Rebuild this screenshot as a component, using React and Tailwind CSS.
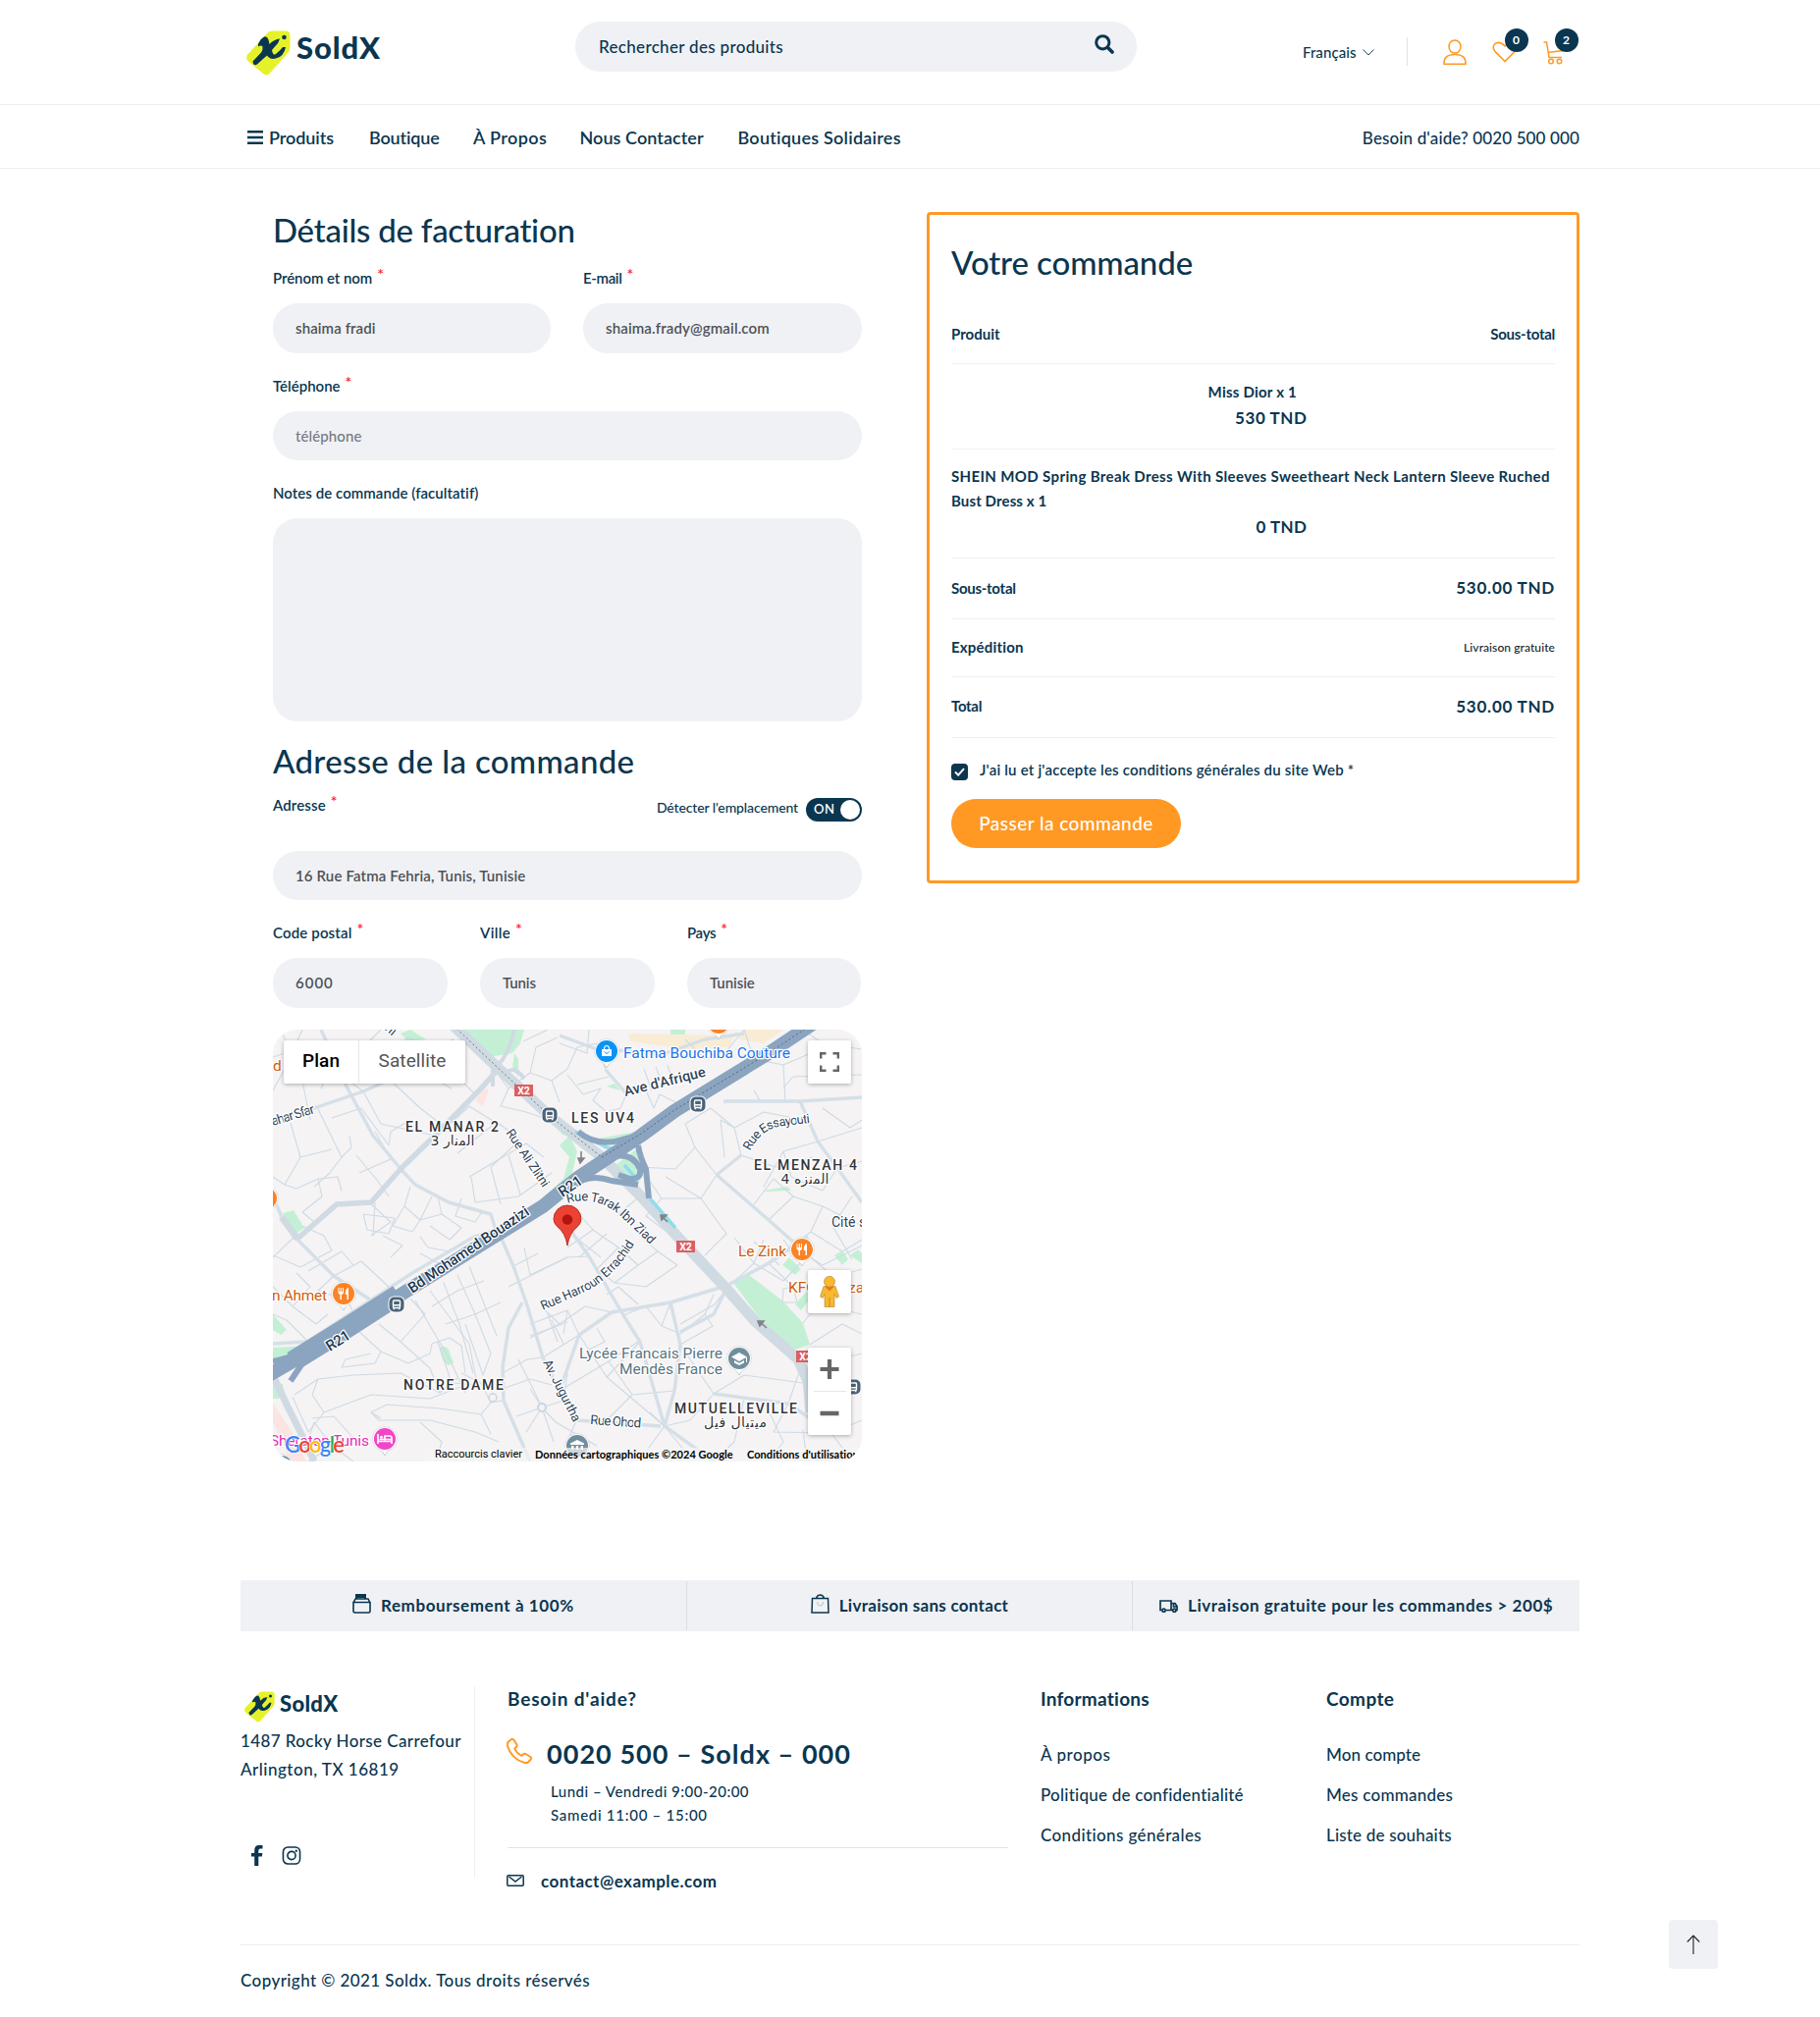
import React from "react";

function Tag({ className }) {
  return (
    <svg viewBox="0 0 45 46" className={className} fill="none">
      <path d="M22 2Q23.500 .5 26 .5H40Q44.500 .5 44.500 5V17Q44.500 20 43 22L24 43.500Q20 47.500 16.500 43.500L1.200 31Q-.8 27.500 1.200 24.500Z" fill="#e5f22a" />
      <path d="M13 12Q15 8 18 6.500Q21 5.500 22.500 9.500L23.500 14Q28 9 34 8.500Q33 13 29 16.500L26 20Q27 26 30 24Q35 20 37 17L40 17Q38 27 30 28.500Q24 30 21 25.500L17 29L11 34.500Q7 37 6.500 31.500L15 22.500Q17 20 16.500 16.500Q15 14.500 12 16.500Q11 14.500 13 12Z" fill="#0a3650" />
      <circle cx="38.500" cy="7" r="2.300" fill="#0a3650" />
    </svg>
  );
}

function Label({ children, className = "", required = true }) {
  return (
    <div className={`flex h-6 items-center whitespace-pre text-[15px] leading-6 font-semibold ${className}`}>
      {children}
      {required && <span className="relative -top-[4px] ml-[5px] text-[16px] font-semibold tracking-normal text-[#ff1a1a]">*</span>}
    </div>
  );
}

function Field({ children, className = "" }) {
  return (
    <div className={`flex items-center rounded-[25px] bg-[#f0f1f5] px-[23px] text-[15px] font-semibold text-[#4e5257] ${className}`}>
      {children}
    </div>
  );
}

function Badge({ children }) {
  return (
    <span className="absolute -top-[11px] left-3 flex h-6 w-6 items-center justify-center rounded-full bg-[#0a3650] text-[12px] font-bold text-white">
      {children}
    </span>
  );
}

function Header() {
  return (
    <header className="h-[107px] border-b border-[#efefef]">
      <div className="mx-auto flex w-[1364px] items-start">
        <a className="ml-[6px] flex w-[143px] pt-[31px]">
          <Tag className="h-[46px] w-[45px]" />
          <span className="ml-[6px] text-[31px] leading-[35px] font-black tracking-[0.9px]">SoldX</span>
        </a>
        <div className="mt-[22px] ml-[192px] flex h-[51px] w-[572px] justify-between rounded-[25px] bg-[#f0f1f5] pl-[24px] pr-[23px]">
          <span className="self-center pt-px text-[17px] font-medium tracking-[0.32px]">Rechercher des produits</span>
          <svg viewBox="0 0 20 20" className="mt-[13px] h-5 w-5" fill="none" stroke="#0a3650" strokeLinecap="round">
            <circle cx="8.300" cy="8.300" r="6.600" strokeWidth="3" />
            <path d="M13.500 13.500L18 18" strokeWidth="3.600" />
          </svg>
        </div>
        <div className="ml-[169px] flex pt-[38px]">
          <span className="mt-[3px] text-[15px] leading-6 font-medium tracking-[0.07px]">Français</span>
          <svg viewBox="0 0 12 7" className="mt-[12px] ml-[6px] h-[7px] w-[12px]" fill="none" stroke="#0a3650" strokeWidth=".9"><path d="M.5 .5L6 6L11.500 .5" /></svg>
          <span className="ml-[33px] h-[29px] w-px bg-[#e3e3e6]" />
          <svg viewBox="0 0 24 26" className="mt-[2px] ml-[36px] h-[26px] w-6" fill="none" stroke="#ff9923" strokeWidth="1.500">
            <ellipse cx="12" cy="7.500" rx="6" ry="6.600" />
            <path d="M1 25.200Q.5 15.500 12 15.500Q23.500 15.500 23 25.200Z" />
          </svg>
          <div className="relative ml-[26px] h-7 w-[27px] pt-[4px]">
            <svg viewBox="0 0 26 22" className="h-[22px] w-[26px]" fill="none" stroke="#ff9923" strokeWidth="1.600"><path d="M13 20.500L3 10.500Q-.5 5.500 3 2.500Q8-.5 13 5Q18-.5 23 2.500Q26.500 5.500 23 10.500Z" /></svg>
            <div className="absolute top-[2px] left-px"><Badge>0</Badge></div>
          </div>
          <div className="relative ml-[25px] h-7 w-[24px] pt-[4px]">
            <svg viewBox="0 0 24 24" className="h-6 w-6" fill="none" stroke="#ff9923" strokeWidth="1.500">
              <path d="M.5 1H3.500L6 16.500H19M5 11.500L20 9.500L22 3.500" /><circle cx="8" cy="20.500" r="2.300" /><circle cx="16.500" cy="20.500" r="2.300" />
            </svg>
            <div className="absolute top-[2px] left-0"><Badge>2</Badge></div>
          </div>
        </div>
      </div>
    </header>
  );
}

function Nav() {
  return (
    <nav className="h-[65px] border-b border-[#efefef]">
      <div className="mx-auto flex h-[66px] w-[1364px] items-center text-[18px] font-semibold whitespace-nowrap">
        <svg viewBox="0 0 16 14" className="ml-[6.500px] h-[14px] w-4" fill="#0a3650"><path d="M0 0H16V2.500H0ZM0 5.700H16V8.200H0ZM0 11.400H16V13.900H0Z" /></svg>
        <span className="ml-[6.500px] w-[102px] tracking-[-0.07px]">Produits</span>
        <span className="w-[106px] tracking-[-0.16px]">Boutique</span>
        <span className="w-[108.500px] tracking-[0.4px]">À Propos</span>
        <span className="w-[161px] tracking-[0.06px]">Nous Contacter</span>
        <span className="tracking-[0.24px]">Boutiques Solidaires</span>
        <span className="ml-auto pt-px text-[17px] font-medium tracking-[0.13px]">Besoin d'aide? 0020 500 000</span>
      </div>
    </nav>
  );
}

const minor = [
  "0,28 30,18 62,40 92,63", "8,0 30,52 38,92", "30,0 12,40 0,62", "62,30 49,60", "92,63 110,96 165,108", "119,51 150,80 176,100",
  "45,79 70,130 58,146 42,160", "70,130 80,120 78,108", "18,95 28,130 60,122", "28,130 12,158 0,150", "60,90 90,80 118,118", "88,146 120,132 104,104",
  "118,118 120,104 140,92", "12,158 24,162 46,152 50,170 30,186", "30,186 42,196 62,178", "46,152 66,150 70,164", "85,128 105,152 118,170",
  "0,230 28,242 60,225 52,210 30,200", "100,210 120,196 98,176", "92,188 124,192 118,208 96,204 92,188", "104,176 102,210", "140,160 134,180 150,194 162,170",
  "150,194 172,188 168,170", "134,180 122,200 142,206 150,194", "172,188 192,202 180,214 160,200", "192,172 186,190 206,196 214,184",
  "176,100 200,78 232,98", "188,126 228,94 252,112 222,140", "200,150 258,116 276,130", "202,150 206,176 250,170 284,146", "222,140 232,178", "240,128 252,168",
  "225,40 240,60 232,78 258,84 276,90", "240,60 262,44 284,52 300,40", "262,44 268,18 290,8", "284,52 292,74", "300,40 310,18 330,14 339,41", "310,56 342,48",
  "255,12 280,0", "110,0 96,14 120,22 138,8", "138,8 160,20 150,42 182,60", "160,20 184,10", "196,30 190,50 206,66",
  "292,14 320,24 322,0", "300,46 316,66 334,60 326,72 340,84 354,80", "354,80 360,66 380,62 388,80", "388,80 394,66 410,74", "378,40 386,62", "390,38 398,58", "402,36 408,54",
  "420,10 440,30 462,22 480,0", "480,0 490,30 520,36 548,24", "520,36 522,74", "505,24 540,0 560,14 600,20", "490,62 496,72", "420,96 430,120 410,142 374,140",
  "420,96 446,80 470,100 456,92 460,130", "430,120 452,148 436,172 400,150", "374,140 396,172 436,172 462,208 440,230", "396,172 380,190 412,214", "352,188 376,168",
  "477,128 470,100 500,84 540,92", "477,128 512,140 550,130", "555,114 520,124 500,160", "520,124 528,150 560,164 575,141", "555,114 600,100", "575,141 600,134", "505,194 530,170 560,180 548,206 532,218",
  "530,170 510,152 490,178", "560,180 600,200", "548,206 580,226 600,214", "560,80 588,100 600,92", "520,59 530,48 600,46", "590,170 570,200 590,234",
  "300,222 326,204 352,222 330,244", "326,204 312,188", "312,232 340,208", "306,210 334,232", "352,222 372,240 348,258 330,244", "372,240 392,226 412,240 380,262 348,258", "392,226 376,212", "240,262 300,232 322,231",
  "256,222 262,250 300,232", "245,241 270,228", "275,284 292,300 318,282 345,288", "292,300 262,314", "262,300 300,286 312,311", "300,286 296,310", "275,334 312,311", "292,368 342,338 372,318",
  "312,311 340,354 399,404", "340,354 374,318", "342,338 366,372 409,368", "366,372 340,398", "330,304 338,318 322,326", "357,291 380,282 396,302 405,278", "396,302 415,310 440,290 449,270",
  "415,321 449,371 425,398 399,404", "440,290 448,302 415,321", "415,300 450,280 462,264", "449,371 480,352 540,360", "525,381 535,352 560,340", "480,376 470,420 449,440", "500,378 520,420 505,440", "525,381 510,410 569,411 590,440", "569,411 600,398", "560,340 600,330", "540,408 544,440",
  "462,264 490,238 500,214", "470,212 490,238 520,256", "505,238 528,220 560,240", "520,256 545,230 572,252 555,280 540,299", "505,238 530,262", "490,216 516,240", "560,240 600,220", "555,280 600,290", "572,252 600,244", "519,278 520,264 530,262 534,278 519,278", "547,321 580,300 600,310", "530,228 520,214",
  "22,211 0,232", "62,251 90,236 118,262", "62,251 46,266 76,276 86,296", "105,279 118,262", "36,246 70,226 82,240", "0,262 20,282 38,262 24,248", "20,282 44,300 56,290", "0,290 14,296 36,318", "120,232 132,220 112,210", "150,228 172,240", "150,211 158,222 180,226",
  "86,306 110,328 104,340 70,344 74,336 100,330", "110,328 138,340 160,330 162,320 180,314 192,322 196,350", "108,300 130,318 155,290", "130,318 160,345 170,370 188,355", "155,290 140,274", "145,276 180,336 196,370", "160,266 200,320 208,362", "174,258 190,300 204,350", "188,250 206,290 222,330 214,352 196,300", "200,241 228,312", "162,282 188,266", "188,266 215,256", "176,300 206,290", "206,290 232,278",
  "168,318 182,360 208,362", "22,372 46,356 82,352 130,350 170,370", "46,356 40,372 52,390 100,372 160,376 196,362", "52,390 36,410 20,374", "40,396 62,394 82,416 60,424 42,400", "110,396 100,390 116,382 170,386 212,392 222,380", "100,390 108,398 160,398 206,410 230,420", "150,400 172,420 166,440", "222,380 212,360 192,350", "222,380 234,378", "212,392 222,412", "234,350 259,336 275,334", "234,366 262,356 284,362", "250,336 268,372 274,385",
  "274,385 248,394", "274,385 296,378", "274,385 258,410", "274,385 286,420", "274,385 262,366", "274,385 288,400 330,424", "300,350 296,378 309,398", "309,398 300,420", "399,404 380,430 386,440", "399,404 420,430", "399,404 384,390",
  "284,296 296,320", "262,312 300,298", "280,290 290,318", "340,270 352,262 372,280", "36,440 60,424", "60,424 82,440", "42,400 34,424",
];

const medium = [
  "49,0 75,58 102,108 131,143 145,158 179,176 222,188 227,204", "0,92 45,79 92,63 119,51 150,40", "22,211 62,251 105,279", "9,191 0,170",
  "232,211 245,241 259,281 275,334 292,368 309,398", "254,278 240,304 234,344 235,378 245,401 262,440", "0,320 35,318 142,248 205,211",
  "300,200 322,231 357,291 374,318 399,404", "292,368 312,311 345,288 405,278 462,261 505,238 545,211", "405,278 415,321 409,368 399,404 449,440",
  "309,398 395,404", "449,371 525,381 569,411", "459,73 537,73 600,69", "537,73 555,114 575,141 600,176", "452,148 505,194 532,218", "477,128 452,148", "339,41 359,64", "292,6 330,20 400,24 440,10 480,4", "227,204 205,211", "462,264 449,290 415,308",
];

function Halo({ children, ...p }) {
  return <text stroke="#fff" strokeWidth="2.500" strokeLinejoin="round" paintOrder="stroke" {...p}>{children}</text>;
}

function Pin({ x, y, color, children }) {
  return (
    <g transform={`translate(${x} ${y})`}>
      <path d="M-5 9L0 17L5 9Z" fill="#fff" stroke="#b9bfc5" strokeWidth=".8" />
      <circle r="12.500" fill="#fff" stroke="#c9ced3" strokeWidth=".6" />
      <path d="M-5 10L0 15.500L5 10Z" fill="#fff" />
      <circle r="11" fill={color} />
      {children}
    </g>
  );
}

const Fork = () => (
  <g fill="#fff"><path d="M-5.500-6V-1.500Q-5.500 .8-3.500 1V6H-2V1Q0 .8 0-1.500V-6H-1V-2H-2.200V-6H-3.300V-2H-4.500V-6Z" /><path d="M5-6Q1.500-5 1.800 1H3.500V6H5Z" /></g>
);

function Bus({ x, y }) {
  return (
    <g transform={`translate(${x} ${y})`}>
      <rect x="-8.500" y="-8.500" width="17" height="17" rx="6" fill="#fff" /><rect x="-7.500" y="-7.500" width="15" height="15" rx="5" fill="#4b6379" />
      <rect x="-3.500" y="-4" width="7" height="7.500" rx="1" fill="none" stroke="#fff" strokeWidth="1.400" /><path d="M-3.500 .8H3.500M-2.800 4V5.200M2.800 4V5.200" stroke="#fff" strokeWidth="1.400" />
    </g>
  );
}

function X2({ x, y }) {
  return (
    <g><rect x={x} y={y} width="19" height="12" fill="#dc5f61" /><text x={x + 9.500} y={y + 9.700} textAnchor="middle" fontSize="10.500" fontWeight="700" fill="#fff">X2</text></g>
  );
}

function MapDrawing() {
  return (
    <svg viewBox="0 0 600 440" className="block h-[440px] w-[600px] font-['Roboto','Noto_Sans',sans-serif]">
      <rect width="600" height="440" fill="#f5f3f4" />
      <g fill="#c3f0d4">
        <path d="M188 0H256L252 14L244 24L220 28Z" /><path d="M246 24L250 30V48L244 40Z" /><path d="M130 4L140 0L156 10L138 12Z" />
        <path d="M10 187L21 184L32 202L22 209Z" /><path d="M0 290L14 306L8 311L0 306Z" /><path d="M0 324L36 322L20 335L0 337Z" /><path d="M0 361L10 361L12 372L6 376H0Z" />
        <path d="M170 324Q174 320 179 326L184 340L178 342Q171 336 170 324Z" />
        <path d="M228 204L270 176L296 152L302 130L292 118L302 108L310 124L304 150L276 178Z" /><path d="M266 76L300 104L296 108Z" />
        <path d="M326 112L370 104L409 80L412 84L380 108L345 118Z" /><path d="M349 138L370 122L376 150L370 160Z" /><path d="M405 0H420V11L405 8Z" />
        <path d="M469 258L472 253L485 250L519 276L540 299L547 321L532 326L505 306Z" /><path d="M519 240L526 232L538 244L532 250Z" /><path d="M532 280L548 262L552 268L538 286Z" /><path d="M572 230L580 225L586 234L580 240Z" /><path d="M588 230L596 224L600 228V238Z" /><path d="M500 164L524 160L528 164L502 165Z" /><path d="M340 58L348 55L354 62Z" />
      </g>
      <path d="M362 4L470 6L465 18L420 20L364 12ZM480 0H520L500 14L474 10Z" fill="#f8ecd5" />
      <path d="M206 72L216 60L220 62L214 78Z" fill="#fce4e2" /><path d="M0 380L22 414L34 440H18L0 400Z" fill="#fce4e2" />
      <g fill="none" stroke="#cedae4" strokeWidth="1.100" strokeLinejoin="round">{minor.map((p, i) => <polyline key={i} points={p} />)}</g>
      <g fill="none" stroke="#d5dfe7" strokeWidth="3.400" strokeLinejoin="round">{medium.map((p, i) => <polyline key={i} points={p} />)}</g>
      <circle cx="274" cy="385" r="4" fill="#f5f3f4" stroke="#c9d6e1" strokeWidth="2" /><circle cx="224" cy="375" r="4" fill="#f5f3f4" stroke="#c9d6e1" strokeWidth="1.500" />
      <g fill="none" stroke="#d0dae2" strokeLinejoin="round">
        <polyline strokeWidth="5.500" points="25,213 65,178 100,176 131,141 165,108 212,60 228,42" />
        <polyline strokeWidth="7" points="25,213 9,191" /><polyline strokeWidth="7" points="0,352 15,384 35,424 42,440" />
        <path strokeWidth="4" d="M224 36V58M224 42Q240 28 246 0M238 44Q246 36 256 50" />
        <polyline strokeWidth="11" points="184,-4 226,36 282,88 335,130 375,170 415,214 462,264 492,298 535,336 545,358 548,390" />
      </g>
      <path d="M308 104L340 120L350 122M358 138L372 154M384 172L410 202" stroke="#91dcec" strokeWidth="3.500" fill="none" />
      <g fill="none" stroke="#8ba4bf" strokeLinejoin="round">
        <path strokeWidth="6" d="M311 104Q330 120 356 112L372 108M372 118Q374 130 380 142L383 172M345 130Q366 124 374 142Q376 152 364 152L352 148M306 160Q320 146 345 154L372 158M0 338Q20 334 36 326M30 340L18 358" />
        <polyline strokeWidth="14" points="-4,352 75,306 135,267 275,180 312,150 375,108 409,83 505,24 550,-6" />
        <polyline strokeWidth="21" points="20,338 75,304 128,270" />
      </g>
      <path d="M184-4L226 36L282 88L335 130" fill="none" stroke="#6d7680" strokeWidth="1" strokeDasharray="2 2.500" />
      <path d="M335 130L375 106L409 82L505 24L550-6" fill="none" stroke="#5c6878" strokeWidth="1" strokeDasharray="2 2.500" />
      <g stroke="#808488" strokeWidth="1.600" fill="#808488"><path d="M503 304L496 298M314 124V133M402 196L396 190" /><path d="M494 297H500L496 302ZM311 131H317L313 136ZM395 189H401L396 194Z" /></g>

      <g fill="#323437" fontSize="14" fontWeight="500">
        <Halo x="135" y="104" textLength="95">EL MANAR 2</Halo>
        <Halo x="304" y="95" textLength="64">LES UV4</Halo>
        <Halo x="490" y="143" textLength="105">EL MENZAH 4</Halo>
        <Halo x="133" y="367" textLength="102">NOTRE DAME</Halo>
        <Halo x="409" y="391" textLength="125">MUTUELLEVILLE</Halo>
      </g>
      <g fill="#323437" fontSize="14" textAnchor="middle" className="font-['DejaVu_Sans',sans-serif]">
        <Halo x="183" y="118" direction="rtl" textLength="45">المنار 3</Halo>
        <Halo x="542" y="157" direction="rtl" textLength="49">المنزه 4</Halo>
        <Halo x="471" y="405" direction="rtl" textLength="64">ميتيال فيل</Halo>
      </g>
      <g fill="#2f4358" fontSize="13.500">
        <Halo x="0" y="98" transform="rotate(-17 0 98)" textLength="45">ahar Sfar</Halo>
        <Halo x="110" y="-3" transform="rotate(40 110 -3)">tni</Halo>
        <Halo x="237" y="105" transform="rotate(56 237 105)" textLength="68" fontSize="13">Rue Ali Zlitni</Halo>
        <Halo x="359" y="68" transform="rotate(-14 359 68)" textLength="85" fontSize="14.500" fontWeight="500">Ave d'Afrique</Halo>
        <Halo x="275" y="339" transform="rotate(63 275 339)" textLength="69" fontSize="13">Av. Jugurtha</Halo>
        <Halo x="323" y="402" transform="rotate(4 323 402)" textLength="52">Rue Ohod</Halo>
        <Halo x="569" y="201" fontSize="14">Cité s</Halo>
        <path id="tarak" d="M300 177Q330 168 354 190T385 220" fill="none" /><path id="harroun" d="M275 286L316 268Q348 253 370 215" fill="none" /><path id="essay" d="M486 124Q498 100 520 98L546 95" fill="none" />
        <Halo fontSize="13"><textPath href="#tarak" textLength="100">Rue Tarak Ibn Ziad</textPath></Halo>
        <Halo fontSize="13"><textPath href="#harroun" textLength="118">Rue Harroun Errachid</textPath></Halo>
        <Halo fontSize="13"><textPath href="#essay" textLength="72">Rue Essayouti</textPath></Halo>
      </g>
      <g fill="#22374f" fontSize="15" fontWeight="500">
        <Halo x="142" y="269" transform="rotate(-34 142 269)" textLength="145">Bd Mohamed Bouazizi</Halo>
        <Halo x="295" y="171" transform="rotate(-34 295 171)" textLength="26">R21</Halo>
        <Halo x="58" y="328" transform="rotate(-32 58 328)" textLength="26">R21</Halo>
      </g>
      <X2 x={246} y={56} /><X2 x={411} y={215} /><X2 x={533} y={327} />
      <Bus x={282} y={87} /><Bus x={433} y={76} /><Bus x={126} y={280} /><Bus x={591} y={364} />
      <Pin x={340} y={22} color="#0a93f5"><path d="M-5-2H5V5H-5Z" fill="#fff" /><path d="M-2.500-2Q-2.500-5.500 0-5.500T2.500-2" fill="none" stroke="#fff" strokeWidth="1.200" /><path d="M-2.500 .5Q0 4 2.500 .5" fill="none" stroke="#0a93f5" /></Pin>
      <Pin x={454} y={-7} color="#fb8325" /><Pin x={-7} y={172} color="#fb8325" />
      <Pin x={539} y={224} color="#fb8325"><Fork /></Pin><Pin x={72} y={269} color="#fb8325"><Fork /></Pin>
      <Pin x={114} y={417} color="#f346c6"><path d="M-7-5V5M-7 2.500H7M7 5V-1Q7-3 5-3H0V1.500M-5.500 .5H6" stroke="#fff" strokeWidth="1.700" fill="none" /><circle cx="-3.500" cy="-1.800" r="1.500" fill="#fff" /></Pin>
      <Pin x={475} y={335} color="#718e9d"><path d="M-8-1.500L0-6L8-1.500L0 3ZM-5 2L0 4.800L5 2V4.500L0 7L-5 4.500ZM7-1H8V4H7Z" fill="#fff" /></Pin>
      <Pin x={310} y={424} color="#718e9d"><path d="M-7-2.500L0-6L7-2.500V-1H-7ZM-6 0H-3.500V4H-6ZM-1.200 0H1.200V4H-1.200ZM3.500 0H6V4H3.500Z" fill="#fff" /></Pin>
      <Pin x={9} y={445} color="#718e9d" />
      <g fontSize="15.500">
        <Halo x="357" y="29" textLength="170" fill="#1a73e8">Fatma Bouchiba Couture</Halo>
        <g fill="#cf5d0a"><Halo x="0" y="42">d</Halo><Halo x="-1" y="276" textLength="56">n Ahmet</Halo><Halo x="474" y="231" textLength="49">Le Zink</Halo><Halo x="525" y="268">KFC</Halo><Halo x="586" y="268">za</Halo></g>
        <g fill="#577582" textAnchor="end"><Halo x="458" y="335" textLength="146">Lycée Francais Pierre</Halo><Halo x="458" y="350.500" textLength="105">Mendès France</Halo></g>
        <Halo x="-3" y="424" textLength="101" fill="#e32db3">Sheraton Tunis</Halo>
      </g>
      <path d="M300 220Q298 207 289.500 200.500Q286 197 286 193A14 14 0 0 1 314 193Q314 197 310.500 200.500Q302 207 300 220Z" fill="#ea4335" stroke="#b8271e" strokeWidth=".9" />
      <circle cx="300" cy="193.500" r="5.200" fill="#b31412" />
      <path d="M155 426H600V440H155Z" fill="#f5f5f5" fillOpacity=".7" />
      <text x="12" y="431" fontSize="22" fontWeight="600" textLength="61" stroke="#fff" strokeWidth="1.500" paintOrder="stroke" className="font-['Lato']">
        <tspan fill="#4285f4">G</tspan><tspan fill="#ea4335">o</tspan><tspan fill="#fbbc05">o</tspan><tspan fill="#4285f4">g</tspan><tspan fill="#34a853">l</tspan><tspan fill="#ea4335">e</tspan>
      </text>
    </svg>
  );
}

function GoogleMap() {
  return (
    <div className="relative mt-[22px] h-[440px] w-[600px] overflow-hidden rounded-[25px]">
      <MapDrawing />
      <div className="absolute top-[11px] left-[11px] flex h-11 rounded-[2px] bg-white font-['Roboto'] text-[19px] leading-[42px] tracking-[0.1px] shadow-[0_1px_4px_rgba(0,0,0,.3)]">
        <span className="w-[77px] border-r border-[#e6e6e6] text-center font-medium text-black">Plan</span>
        <span className="w-[108px] text-center text-[#565656]">Satellite</span>
      </div>
      <div className="absolute top-[11px] right-[11px] flex h-11 w-11 items-center justify-center rounded-[2px] bg-white shadow-[0_1px_4px_rgba(0,0,0,.3)]">
        <svg viewBox="0 0 20 20" className="h-5 w-5" fill="none" stroke="#666" strokeWidth="2.400"><path d="M1.200 6.500V1.200H6.500M13.500 1.200H18.800V6.500M18.800 13.500V18.800H13.500M6.500 18.800H1.200V13.500" /></svg>
      </div>
      <div className="absolute top-[245px] right-[11px] flex h-11 w-11 items-center justify-center rounded-[2px] bg-white shadow-[0_1px_4px_rgba(0,0,0,.3)]">
        <svg viewBox="0 0 20 32" className="h-8 w-5"><path d="M4 10.500H16L19.500 21L17 22.500L15 18.500V31.500H5V18.500L3 22.500L.5 21Z" fill="#fbb82b" stroke="#a9823b" strokeWidth=".6" /><path d="M5.500 11H14.500L10 15.500Z" fill="#e07b1d" /><circle cx="10" cy="5.800" r="5.500" fill="#fbb82b" stroke="#a9823b" strokeWidth=".6" /><path d="M10 22V31.500" stroke="#a9823b" strokeWidth=".8" /></svg>
      </div>
      <div className="absolute top-[324px] right-[11px] flex h-[89px] w-11 flex-col items-center rounded-[2px] bg-white shadow-[0_1px_4px_rgba(0,0,0,.3)]">
        <svg viewBox="0 0 20 20" className="mt-3 h-5 w-5" stroke="#666" strokeWidth="4.200"><path d="M.5 10H19.500M10 0V20" /></svg>
        <span className="mt-3 h-px w-[33px] bg-[#e6e6e6]" />
        <svg viewBox="0 0 20 20" className="mt-3 h-5 w-5" stroke="#666" strokeWidth="4.500"><path d="M.5 10H19.500" /></svg>
      </div>
      <div className="absolute bottom-0 left-[165px] flex h-[15px] w-[428px] overflow-hidden text-[11px] leading-[15px] whitespace-nowrap text-black">
        <span className="w-[102px] shrink-0 font-['Roboto']">Raccourcis clavier</span>
        <span className="w-[216px] shrink-0 font-bold tracking-[0.04px]">Données cartographiques ©2024 Google</span>
        <span className="shrink-0 font-bold tracking-[0.05px]">Conditions d'utilisation</span>
      </div>
    </div>
  );
}

function Billing() {
  return (
    <section className="ml-[33px] w-[600px] pt-[42px]">
      <h2 className="h-10 text-[33px] leading-10 font-medium tracking-[-0.25px]">Détails de facturation</h2>
      <div className="mt-[17px] grid grid-cols-[283px_284px] gap-[33px]">
        <div><Label className="tracking-[-0.06px]">Prénom et nom</Label><Field className="mt-[14px] h-[51px] tracking-[0.1px]">shaima fradi</Field></div>
        <div><Label className="tracking-[-0.35px]">E-mail</Label><Field className="mt-[14px] h-[51px] tracking-[0.14px]">shaima.frady@gmail.com</Field></div>
      </div>
      <Label className="mt-[21px] tracking-[0px]">Téléphone</Label>
      <div className="mt-[14px] flex h-[50px] items-center rounded-[25px] bg-[#f0f1f5] px-[23px] text-[15px] font-medium tracking-[0.11px] text-[#757a81]">téléphone</div>
      <Label required={false} className="mt-[21px] tracking-[0.06px]">Notes de commande (facultatif)</Label>
      <div className="mt-[14px] h-[207px] rounded-[25px] bg-[#f0f1f5]" />
      <h2 className="mt-5 h-10 text-[33px] leading-10 font-medium tracking-[0.34px]">Adresse de la commande</h2>
      <div className="flex h-[72px] items-start justify-between">
        <Label className="mt-[13px] tracking-[0.13px]">Adresse</Label>
        <div className="mt-[18px] flex h-6">
          <span className="mr-[8px] text-[14px] leading-5 font-medium tracking-[-0.12px]">Détecter l'emplacement</span>
          <span className="flex h-6 w-[57px] items-center justify-between rounded-full bg-[#0a3650] pr-[2px] pl-[8px] text-[13px] font-semibold tracking-[0.5px] text-white">
            ON<span className="h-5 w-5 rounded-full bg-white" />
          </span>
        </div>
      </div>
      <Field className="h-[50px] tracking-[0.13px]">16 Rue Fatma Fehria, Tunis, Tunisie</Field>
      <div className="mt-[21px] grid grid-cols-[178px_178px_177px] gap-[33px]">
        <div><Label className="tracking-[0.15px]">Code postal</Label><Field className="mt-[14px] h-[51px] tracking-[1px]">6000</Field></div>
        <div><Label className="tracking-[0.35px]">Ville</Label><Field className="mt-[14px] h-[51px] tracking-[-0.15px]">Tunis</Field></div>
        <div><Label className="tracking-[-0.3px]">Pays</Label><Field className="mt-[14px] h-[51px] tracking-[-0.08px]">Tunisie</Field></div>
      </div>
      <GoogleMap />
    </section>
  );
}

function Order() {
  return (
    <section className="mt-11 ml-[66px] h-[684px] w-[665px] rounded-[4px] border-[3px] border-[#ff9924] px-[22px] pt-7 text-[15px] font-bold whitespace-nowrap">
      <h2 className="h-10 text-[33px] leading-10 font-medium tracking-[-0.1px]">Votre commande</h2>
      <div className="flex h-[84px] items-end justify-between border-b border-[#f0f0f2] pb-[18px] leading-6">
        <span>Produit</span><span className="tracking-[-0.27px]">Sous-total</span>
      </div>
      <div className="flex h-[87px] flex-col items-end border-b border-[#f0f0f2] pt-4">
        <span className="mr-[263px] h-[26px] leading-6 tracking-[0.22px]">Miss Dior x 1</span>
        <span className="mr-[252.500px] text-[17px] leading-[26px] tracking-[0.58px]">530 TND</span>
      </div>
      <div className="flex h-[111px] flex-col items-end border-b border-[#f0f0f2] pt-[15px] leading-[25px]">
        <p className="w-full tracking-[0.37px]">SHEIN MOD Spring Break Dress With Sleeves Sweetheart Neck Lantern Sleeve Ruched</p>
        <p className="w-full tracking-[0.12px]">Bust Dress x 1</p>
        <span className="mt-px mr-[252.500px] text-[17px] leading-[26px] tracking-[0.45px]">0 TND</span>
      </div>
      <div className="flex h-[62px] items-center justify-between border-b border-[#f0f0f5]">
        <span className="tracking-[-0.27px]">Sous-total</span><span className="-mt-[2px] text-[17px] tracking-[0.76px]">530.00 TND</span>
      </div>
      <div className="flex h-[59px] items-center justify-between border-b border-[#f0f0f5]">
        <span className="-mt-px tracking-[0.18px]">Expédition</span><span className="text-[12px] font-medium tracking-[0.08px] text-[#222]">Livraison gratuite</span>
      </div>
      <div className="flex h-[62px] items-center justify-between border-b border-[#f0f0f5]">
        <span className="-mt-[2px] tracking-[-0.3px]">Total</span><span className="-mt-[2px] text-[17px] tracking-[0.76px]">530.00 TND</span>
      </div>
      <div className="mt-[22px] flex h-[21px] items-center font-medium">
        <span className="mt-[4px] flex h-[17px] w-[17px] items-center justify-center rounded-[4px] bg-[#0a3650]">
          <svg viewBox="0 0 12 10" className="h-[9px] w-[11px]" fill="none" stroke="#fff" strokeWidth="2.200"><path d="M1 5L4.500 8.500L11 1.200" /></svg>
        </span>
        <span className="ml-[12px] font-semibold tracking-[0.2px]">J'ai lu et j'accepte les conditions générales du site Web *</span>
      </div>
      <div className="mt-[19px] flex h-[50px] w-[234px] items-center justify-center rounded-[25px] bg-[#ff9924] text-[19px] font-medium tracking-[0.46px] text-white">Passer la commande</div>
    </section>
  );
}

function Features() {
  return (
    <div className="mx-auto mt-[121px] grid h-[52px] w-[1364px] grid-cols-3 bg-[#f0f1f5] py-px text-[17px] font-bold whitespace-nowrap">
      <div className="flex items-center justify-center border-r border-[#d9dce6]">
        <svg viewBox="0 0 19 20" className="mr-[10px] mb-[5px] h-5 w-[19px]" fill="none" stroke="#0a3650" strokeWidth="1.600"><path d="M1 8.500H18V17.500Q18 19 16.500 19H2.500Q1 19 1 17.500ZM1.500 8L3 5H16L17.500 8" /><path d="M4 5V1H13V5M5 3H12" strokeWidth="2" /></svg>
        <span className="tracking-[0.58px]">Remboursement à 100%</span>
      </div>
      <div className="flex items-center justify-center border-r border-[#d9dce6]">
        <svg viewBox="0 0 19 20" className="mr-[10px] mb-[5px] h-5 w-[19px]" fill="none" stroke="#0a3650" strokeWidth="1.500"><path d="M1.500 4.500H17.500L18 19H1ZM5.500 4.500Q6.500 1 9.500 1Q12.500 1 13.500 4.500" /><path d="M6.500 8Q6.500 12 9.500 12T12.500 8" stroke="#b6c0ca" strokeWidth="1" /></svg>
        <span className="tracking-[0.28px]">Livraison sans contact</span>
      </div>
      <div className="flex items-center justify-center">
        <svg viewBox="0 0 19 13" className="mr-[10px] h-[13px] w-[19px]" fill="none" stroke="#0a3650" strokeWidth="1.700"><path d="M2.500 10.500H1V1H12V10.500H6.500M12 3.500H16L18 6.500V10.500H17M12 10.500H13.500M14.500 4V7H18" /><circle cx="4.500" cy="10.700" r="1.600" /><circle cx="15.300" cy="10.700" r="1.600" /></svg>
        <span className="tracking-[0.55px]">Livraison gratuite pour les commandes &gt; 200$</span>
      </div>
    </div>
  );
}

function Footer() {
  return (
    <footer className="mx-auto w-[1364px] whitespace-nowrap">
      <div className="mt-[56px] flex h-[264px] border-b border-[#efefef] text-[17px] font-medium">
        <div className="h-[195px] w-[239px] border-r border-[#efefef]">
          <div className="ml-[4px] flex h-[41px] pt-[5px]">
            <Tag className="h-8 w-[31px]" />
            <span className="ml-[5px] text-[22px] leading-[26px] font-black tracking-[0.3px]">SoldX</span>
          </div>
          <p className="leading-[29px] tracking-[0.4px]">1487 Rocky Horse Carrefour</p>
          <p className="leading-[29px] tracking-[0.5px]">Arlington, TX 16819</p>
          <div className="mt-[63px] flex items-center">
            <svg viewBox="0 0 12 21" className="ml-[11px] h-[21px] w-3" fill="#0a3650"><path d="M3.200 21V11.500H0V8H3.200V5.200Q3.200 0 8 0H11.500V3.500H9.200Q7.300 3.500 7.300 5.400V8H11.400L10.800 11.500H7.300V21Z" /></svg>
            <svg viewBox="0 0 20 20" className="ml-[19px] h-[19px] w-5" fill="none" stroke="#0a3650" strokeWidth="1.700"><rect x="1" y="1" width="18" height="18" rx="5" /><circle cx="10" cy="10" r="4.300" /><circle cx="15" cy="5" r=".5" /></svg>
          </div>
        </div>
        <div className="ml-[33px] w-[510px]">
          <h3 className="text-[19px] leading-[26px] font-bold tracking-[0.83px]">Besoin d'aide?</h3>
          <div className="mt-[25px] flex h-9">
            <svg viewBox="0 0 26 26" className="mt-[2px] -ml-px h-[26px] w-[26px]" fill="none" stroke="#ff9923" strokeWidth="2" strokeLinejoin="round"><path d="M2 3.500L5 1Q6.500 .5 7.500 1.800L10.500 6.500Q11 8 9.800 9L8.300 10.500Q10 15 15.500 17.800L17.200 16.200Q18.300 15.300 19.600 16L24.300 19Q25.500 20 24.800 21.300L22.500 24Q21 25.500 18 24.800Q5 21 1 8Q.5 5 2 3.500Z" /></svg>
            <span className="ml-[15px] text-[27px] leading-9 font-bold tracking-[1.04px]">0020 500 – Soldx – 000</span>
          </div>
          <div className="mt-2 ml-[44px] text-[15px] leading-6">
            <p className="tracking-[0.49px]">Lundi – Vendredi 9:00-20:00</p>
            <p className="tracking-[0.73px]">Samedi 11:00 – 15:00</p>
          </div>
          <div className="mt-[21px] flex border-t border-[#e1e2e4] pt-[22px] leading-6">
            <svg viewBox="0 0 18 12" className="mt-[5px] -ml-px h-[12px] w-[18px]" fill="none" stroke="#0a3650" strokeWidth="1.500"><rect x=".8" y=".8" width="16.400" height="10.400" rx="1" /><path d="M2.500 2L9 7L15.500 2" /></svg>
            <span className="ml-[17px] font-bold tracking-[0.45px]">contact@example.com</span>
          </div>
        </div>
        <div className="ml-[33px] w-[291px] leading-[41px]">
          <h3 className="text-[19px] leading-[26px] font-bold tracking-[0.25px]">Informations</h3>
          <p className="mt-[23px] tracking-[0.56px]">À propos</p>
          <p className="tracking-[0.23px]">Politique de confidentialité</p>
          <p className="tracking-[0.38px]">Conditions générales</p>
        </div>
        <div className="leading-[41px]">
          <h3 className="text-[19px] leading-[26px] font-bold tracking-[0.4px]">Compte</h3>
          <p className="mt-[23px] tracking-[0.08px]">Mon compte</p>
          <p className="tracking-[0.25px]">Mes commandes</p>
          <p className="tracking-[0.18px]">Liste de souhaits</p>
        </div>
      </div>
      <p className="mt-6 text-[17px] leading-6 font-medium tracking-[0.42px]">Copyright © 2021 Soldx. Tous droits réservés</p>
    </footer>
  );
}

export default function App() {
  return (
    <div className="relative h-[2055px] w-[1854px] overflow-hidden bg-white font-['Lato','Noto_Sans',sans-serif] text-[#0a3650]">
      <Header />
      <Nav />
      <main className="mx-auto flex w-[1364px] items-start">
        <Billing />
        <Order />
      </main>
      <Features />
      <Footer />
      <div className="absolute right-[104px] bottom-[49px] flex h-[50px] w-[50px] items-center justify-center rounded-[4px] bg-[#f0f1f5]">
        <svg viewBox="0 0 14 20" className="h-5 w-[14px]" fill="none" stroke="#222" strokeWidth="1.100"><path d="M7 20V1M.8 7.500L7 1L13.200 7.500" /></svg>
      </div>
    </div>
  );
}
